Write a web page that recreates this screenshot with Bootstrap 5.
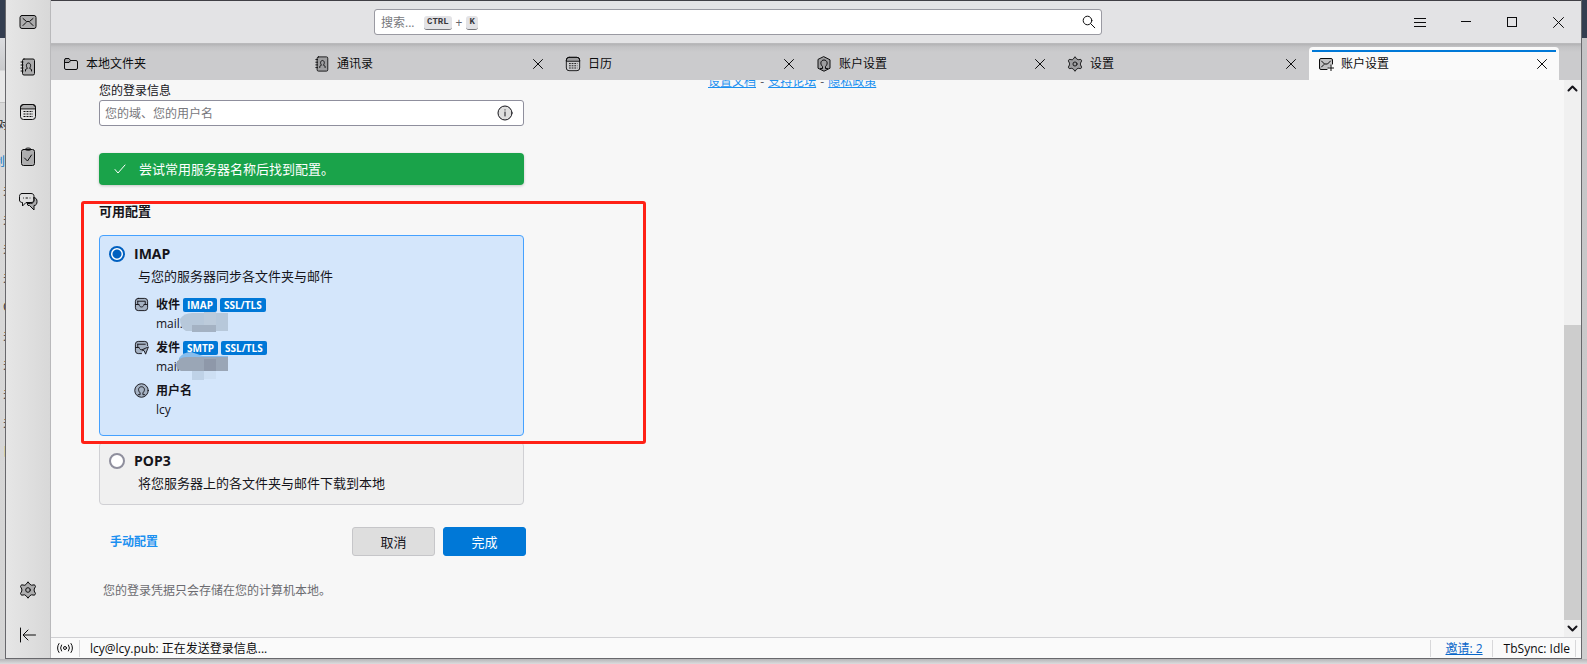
<!DOCTYPE html>
<html lang="zh-CN">
<head>
<meta charset="utf-8">
<meta name="viewport" content="width=device-width, initial-scale=1">
<title>账户设置</title>
<link href="https://cdn.jsdelivr.net/npm/bootstrap@5.3.0/dist/css/bootstrap.min.css" rel="stylesheet">
<style>
body{font:12px/16px "Open Sans","Noto Sans CJK SC",sans-serif;color:#15141a;background:#d6d6d8}
svg{display:block;fill:none;stroke:currentColor;stroke-linecap:round;stroke-linejoin:round;flex:none}
.fl{fill:#18181b40}
button.plain{background:none;border:0;padding:0;color:#0c0c0d;display:flex;align-items:center;justify-content:center}
/* desktop behind the window */
.strip-left{width:5px;color:#333;background:linear-gradient(#343e50 38px,#dcdde0 38px,#c9cacc 70px,#e8e8e8 71px,#e8e8e8 102px,#aaa 102px,#d9d9d9 103px,#d4d4d4);padding-top:115px}
.strip-left div{height:29px;line-height:20px;padding-left:3px;white-space:nowrap}
.strip-left div.first{height:37px;padding-left:0;margin-left:-3px}
.strip-left div.linked{color:#0b78c8;padding-left:0;margin-left:-7px}
.strip-left div.warm{color:#b85b00}
.strip-right{width:5px;background:linear-gradient(#343e50 38px,#c4c4c6 38px,#cfcfcf)}
.strip-bottom{height:5px;background:linear-gradient(#b5b5b7,#dcdcde)}
.app{border:solid #68686c;border-width:0 1px 1px;background:#f7f7f7}
.spaces{width:45px;border-right:1px solid #b9b9bb;background:linear-gradient(90deg,#e6e6e6,#d8d8d8)}
.spaces .plain{height:45px;width:44px;padding-bottom:1px}
.titlebar{border-top:1px solid #403f45;height:43px;background:#e3e3e5;padding-left:24px}
.search{width:728px}
.search input{height:26px;border:1px solid #9a9aa2;border-radius:3px;padding:0 6px;font-size:12px;line-height:16px}
.search input::placeholder,.login input::placeholder{color:#77777c;opacity:1}
.keys{left:50px;top:6px;color:#66666b;pointer-events:none}
.keys kbd{background:#e3e3e6;color:#38383d;border-bottom:1px solid #77777c;border-radius:3px;font:bold 9px/13px "Liberation Mono",monospace;padding:0 3px}
.search .plain{right:3px;top:4px;width:20px;height:18px}
.winbtn{width:46px;height:42px}
.winbtn.menu{width:42px;padding-right:4px}
.tabs{height:37px;background:linear-gradient(#b3b3b5,#c3c3c5 3px,#cbcbcd 8px);padding:3px 22px 0 3px;border-top:1px solid #b9b9bb}
.tabitem{flex:1 1 0;min-width:0;height:33px;padding:0 10px 0 9px;gap:7px;font-size:12px;color:#0c0c0d}
.tabitem .plain{width:14px;height:14px}
.tabitem.current{background:#fafafa;border-radius:4px 4px 0 0;position:relative}
.tabitem.current::before{content:"";position:absolute;left:3px;right:3px;top:3px;height:2px;background:#0078d7}
.workspace{padding-left:48px;gap:184px}
.login{width:425px;padding-top:3px}
.login input[type=text]{height:26px;border:1px solid #8f8f9d;border-radius:3px;padding:0 5px;font-size:12px;margin-top:1px}
.info{right:11px;top:5px}
.notice{margin-top:27px;height:32px;background:#1aa34a;color:#fff;border-radius:4px;font-size:13px;box-shadow:0 1px 3px #0003;padding-left:15px;gap:13px}
.configs{margin-top:16px}
.configs h2{font-size:13px;line-height:20px;font-weight:700;margin:0 0 14px}
.choice{border:1px solid #d0d0d4;border-radius:4px;background:#f0f0f0;padding:8px 9px 11px;margin-bottom:6px;font-size:13px;line-height:20px}
.choice.on{background:#d4e6fb;border-color:#45a1ff;padding-bottom:16px}
.choice input{appearance:none;width:16px;height:16px;border:2px solid #8f8f9d;border-radius:50%;background:#fff;margin:0 9px 0 0;flex:none}
.choice input:checked{border-color:#0060c0;background:radial-gradient(#0060c0 4px,#fff 5px)}
.choice .name{font-size:14px;font-weight:700;line-height:20px}
.choice p{margin:2px 0 0 29px}
.servers{margin:9px 0 0 25px;font-size:12px;line-height:19px}
.servers .entry{gap:7px}
.servers .entry + .entry{margin-top:5px}
.servers .entry svg.kind{margin-top:2px}
.servers dt{font-weight:700;gap:3px}
.tag{background:#0078d7;color:#fff;border-radius:2px;font-size:10px;line-height:14px;padding:0 4px}
.servers dd{margin:0;position:relative}
.mosaic{position:absolute;stroke:none}
.marker{left:-18px;top:0;width:565px;height:243px;border:3px solid #ff2116;border-radius:3px;pointer-events:none}
.actions{margin:22px -2px 0 0;gap:8px;padding-left:11px}
.actions a{color:#1b90f0;font-weight:700;text-decoration:none}
.actions .btn{width:83px;height:29px;padding:0;font-size:13px;line-height:20px;border-radius:3px;color:#15141a;background:#dedede;border-color:#c6c6c9}
.actions .btn.go{background:#0078d7;border-color:#0078d7;color:#fff}
.hint{margin:27px 0 0 4px;color:#6b6b70}
.help{margin-top:-6px;color:#5b5b66}
.help a{color:#1b90f0}
.help span{margin:0 1px}
.scroller{width:17px;background:#f0f0f0}
.scroller svg{margin:5px 3px}
.thumb{height:56.5%;background:#cdcdcd}
.status{height:21px;border-top:1px solid #d0d0d3;background:#fafafa;font-size:12px;color:#0c0c0d}
.status a{color:#0a67c9}
.cell{border-left:1px solid #d8d8da;line-height:18px;height:17px}
</style>
</head>
<body>
<svg width="0" height="0" class="position-absolute" aria-hidden="true">
<defs>
<symbol id="mail" viewBox="0 0 18 16"><rect class="fl" x="1" y="1.500" width="16" height="13" rx="2"/><path d="M4 4.500l3.500 3h3l3.500-3M4 11.500l3-3M14 11.500l-3-3"/></symbol>
<symbol id="book" viewBox="0 0 16 18"><rect class="fl" x="2.500" y="1" width="12" height="16" rx="1.500"/><path d="M1 4h2M1 7h2M1 10h2M1 13h2M5.500 13v-1.500l2-1.200C5.500 8 6.500 5 8.500 5s3 3 1 5.300l2 1.200V13"/></symbol>
<symbol id="cal" viewBox="0 0 18 18"><rect x="1.500" y="1.500" width="15" height="15" rx="3"/><path class="fl" d="M1.500 5.500v-1a3 3 0 013-3h9a3 3 0 013 3v1z"/><path stroke-linecap="butt" stroke-dasharray="2 1" d="M4.500 8.500H14M4.500 11H14M4.500 13.500H14"/></symbol>
<symbol id="gear" viewBox="0 0 18 18"><path class="fl" d="M7.200 3.200L9 .8l1.800 2.400 1.700 1 3-.4 1 1.700-1.300 2.500v2l1.300 2.500-1 1.700-3-.4-1.700 1L9 17.200l-1.800-2.400-1.700-1-3 .4-1-1.700L2.800 10V8L1.500 5.500l1-1.700 3 .4z"/><circle cx="9" cy="9" r="2.300"/></symbol>
<symbol id="person" viewBox="0 0 16 16"><path d="M4.500 12.500h2v-2C3.500 7.500 5 4 8 4s4.500 3.500 1.500 6.500v2h2"/></symbol>
<symbol id="close" viewBox="0 0 12 12"><path d="M1.500 1.500l9 9M10.500 1.500l-9 9"/></symbol>
<symbol id="tray" viewBox="0 0 16 16"><rect class="fl" x="1.500" y="1.500" width="13" height="13" rx="3"/><path d="M4 4.500h8v3M4 4.500v3M2 8h3.500c0 3.500 5 3.500 5 0H14"/></symbol>
</defs>
</svg>
<div class="vh-100 d-flex flex-column overflow-hidden">
<div class="d-flex flex-grow-1" style="min-height:0">
  <div class="strip-left overflow-hidden flex-shrink-0" aria-hidden="true">
    <div class="first">对</div><div class="linked">创</div><div>关</div><div>关</div><div>关</div><div>关</div><div>C</div><div>关</div><div>关</div><div>关</div><div>关</div><div class="warm">日</div>
  </div>
  <div class="app d-flex flex-grow-1" style="min-width:0">
    <nav class="spaces d-flex flex-column flex-shrink-0" aria-label="空间">
      <button class="plain" aria-label="邮件"><svg width="18" height="16"><use href="#mail"/></svg></button>
      <button class="plain" aria-label="通讯录"><svg width="16" height="18"><use href="#book"/></svg></button>
      <button class="plain" aria-label="日历"><svg width="18" height="18"><use href="#cal"/></svg></button>
      <button class="plain" aria-label="任务"><svg width="16" height="20" viewBox="0 0 16 20"><rect class="fl" x="1.500" y="2.500" width="13" height="16" rx="2"/><path d="M5 2.500c0-2 6-2 6 0 0 1-6 1-6 0zM4.500 11l3 3 4-6"/></svg></button>
      <button class="plain" aria-label="聊天"><svg width="20" height="20" viewBox="0 0 20 20"><path class="fl" d="M16 5.500c2 .5 3 1.500 3 4s-1 4-3 4V18l-4.500-4.500H10l-1-2h3.500c2 0 3.500-1 3.500-3z"/><path d="M4 1.500h9c2 0 3 1 3 3v3c0 2-1 3-3 3H8L4.500 14v-3.500C2.500 10.500 1.500 9.500 1.500 8V4.500c0-2 1-3 2.500-3zM5.500 6h0M8 6h1.500M12 6h0"/></svg></button>
      <button class="plain mt-auto" aria-label="设置"><svg width="18" height="18"><use href="#gear"/></svg></button>
      <button class="plain" aria-label="收起"><svg width="18" height="16" viewBox="0 0 18 16"><path d="M1.500 1v14M16.500 8H4.500M9 3L4 8l5 5"/></svg></button>
    </nav>
    <div class="d-flex flex-column flex-grow-1" style="min-width:0">
      <header class="titlebar d-flex align-items-center flex-shrink-0">
        <form class="search position-relative mx-auto" role="search">
          <input class="form-control" type="text" placeholder="搜索..." aria-label="搜索">
          <span class="keys position-absolute d-flex align-items-center gap-1"><kbd>CTRL</kbd>+<kbd>K</kbd></span>
          <button type="button" class="plain position-absolute" aria-label="搜索"><svg width="14" height="14" viewBox="0 0 14 14"><circle cx="5.500" cy="5.500" r="4.300"/><path d="M8.800 8.800l4 4"/></svg></button>
        </form>
        <div class="d-flex">
          <button class="plain winbtn menu" aria-label="菜单"><svg width="12" height="11" shape-rendering="crispEdges"><path d="M0 1.500h12M0 5.500h12M0 9.500h12"/></svg></button>
          <button class="plain winbtn" aria-label="最小化"><svg width="10" height="10" shape-rendering="crispEdges"><path d="M0 4.500h10"/></svg></button>
          <button class="plain winbtn" aria-label="最大化"><svg width="10" height="10" shape-rendering="crispEdges"><path d="M.5 .5h9v9h-9z"/></svg></button>
          <button class="plain winbtn" aria-label="关闭"><svg width="11" height="11"><path d="M.5 .5l10 10M10.500 .5l-10 10"/></svg></button>
        </div>
      </header>
      <nav class="tabs d-flex flex-shrink-0" style="gap:1px" aria-label="标签页">
        <div class="tabitem d-flex align-items-center"><svg width="16" height="14" viewBox="0 0 16 14"><path d="M3 1.500h3l1.500 2h5.500a1.500 1.500 0 011.500 1.500v6a1.500 1.500 0 01-1.500 1.500H3A1.500 1.500 0 011.500 11V3A1.500 1.500 0 013 1.500z"/><path class="fl" stroke="none" d="M1.500 1.500H6l2 4H1.500z"/><path d="M1.500 5.500H6l1.500-2"/></svg><span>本地文件夹</span></div>
        <div class="tabitem d-flex align-items-center"><svg width="16" height="16"><use href="#book"/></svg><span>通讯录</span><button class="plain ms-auto" aria-label="关闭"><svg width="12" height="12"><use href="#close"/></svg></button></div>
        <div class="tabitem d-flex align-items-center"><svg width="16" height="16"><use href="#cal"/></svg><span>日历</span><button class="plain ms-auto" aria-label="关闭"><svg width="12" height="12"><use href="#close"/></svg></button></div>
        <div class="tabitem d-flex align-items-center"><svg width="16" height="16" viewBox="0 0 16 16"><path class="fl" d="M8 .8l6 3v8.400l-6 3-6-3V3.800z"/><use href="#person" width="16" height="16"/></svg><span>账户设置</span><button class="plain ms-auto" aria-label="关闭"><svg width="12" height="12"><use href="#close"/></svg></button></div>
        <div class="tabitem d-flex align-items-center"><svg width="16" height="16"><use href="#gear"/></svg><span>设置</span><button class="plain ms-auto" aria-label="关闭"><svg width="12" height="12"><use href="#close"/></svg></button></div>
        <div class="tabitem current d-flex align-items-center"><svg width="16" height="14" viewBox="0 0 16 14"><path class="fl" d="M9 12.500H3A1.500 1.500 0 011.500 11V3A1.500 1.500 0 013 1.500h10A1.500 1.500 0 0114.500 3v4"/><path d="M3.500 4l3 3h3l3-3M3.500 10L6 7.500M13 8v6M10 11h6"/></svg><span>账户设置</span><button class="plain ms-auto" aria-label="关闭"><svg width="12" height="12"><use href="#close"/></svg></button></div>
      </nav>
      <div class="d-flex flex-grow-1 overflow-hidden">
        <main class="workspace d-flex flex-grow-1 align-items-start">
          <form class="login flex-shrink-0">
            <label class="d-block" for="user">您的登录信息</label>
            <div class="position-relative">
              <input class="form-control" type="text" id="user" placeholder="您的域、您的用户名">
              <svg class="info position-absolute" width="16" height="16" viewBox="0 0 16 16" stroke="#5b5b66"><circle cx="8" cy="8" r="7" fill="#dedede"/><path d="M8 7v4M8 4.800v.2"/></svg>
            </div>
            <div class="notice d-flex align-items-center" role="status"><svg width="12" height="10" viewBox="0 0 12 10"><path d="M1 5.500l3 3.500 7-8"/></svg><span>尝试常用服务器名称后找到配置。</span></div>
            <section class="configs position-relative">
              <h2>可用配置</h2>
              <div class="choice on">
                <div class="d-flex align-items-center"><input type="radio" name="proto" id="imap" checked><label class="name" for="imap">IMAP</label></div>
                <p>与您的服务器同步各文件夹与邮件</p>
                <dl class="servers mb-0">
                  <div class="entry d-flex"><svg class="kind" width="15" height="15"><use href="#tray"/></svg><div><dt class="d-flex align-items-center"><span>收件</span><span class="tag">IMAP</span><span class="tag">SSL/TLS</span></dt><dd>mail.<svg class="mosaic" style="left:24px;top:-3px" width="48" height="22"><path fill="#b7c8da" d="M0 8q4-6 12-6h36v18H6q-6-3-6-12z"/><path fill="#bccbdb" d="M24 1h12v13H24z"/><path fill="#a4b2c3" d="M12 14h24v7H12z"/></svg></dd></div></div>
                  <div class="entry d-flex"><svg class="kind" width="15" height="15" viewBox="0 0 16 16"><path class="fl" d="M8 14.500H4.500a3 3 0 01-3-3v-7a3 3 0 013-3h7a3 3 0 013 3V6M4 4.500h8M4 4.500v3M2 8h3.500c.5 2 1 2.500 3 2.500"/><path class="fl" d="M15 7.500l-6.500 3 2.500 1.200 1.200 3z"/></svg><div><dt class="d-flex align-items-center"><span>发件</span><span class="tag">SMTP</span><span class="tag">SSL/TLS</span></dt><dd>mail<svg class="mosaic" style="left:20px;top:-5px" width="52" height="30"><path fill="#88bdec" d="M3 6q4-6 12-6l12 4h25v4H3z"/><path fill="#9aa6b6" d="M0 12q3-7 10-7h42v14H5q-5-2-5-7z"/><path fill="#8e98a9" d="M28 7h12v12H28z"/><path fill="#bfd2e7" d="M16 19h12v9H16z"/><path fill="#cddff3" d="M28 19h12v8H28z"/></svg></dd></div></div>
                  <div class="entry d-flex"><svg class="kind" width="15" height="15" viewBox="0 0 16 16"><circle class="fl" cx="8" cy="8" r="7.200"/><use href="#person" width="16" height="16"/></svg><div><dt>用户名</dt><dd>lcy</dd></div></div>
                </dl>
              </div>
              <div class="choice mb-0">
                <div class="d-flex align-items-center"><input type="radio" name="proto" id="pop3"><label class="name" for="pop3">POP3</label></div>
                <p>将您服务器上的各文件夹与邮件下载到本地</p>
              </div>
              <div class="marker position-absolute" aria-hidden="true"></div>
            </section>
            <div class="actions d-flex align-items-center"><a class="me-auto" href="#">手动配置</a><button type="button" class="btn">取消</button><button type="button" class="btn go">完成</button></div>
            <p class="hint">您的登录凭据只会存储在您的计算机本地。</p>
          </form>
          <div class="help text-nowrap"><a href="#">设置文档</a><span> - </span><a href="#">支持论坛</a><span> - </span><a href="#">隐私政策</a></div>
        </main>
        <div class="scroller d-flex flex-column flex-shrink-0" aria-hidden="true">
          <svg width="11" height="7" stroke="#606060" stroke-width="2"><path d="M1.500 5.500l4-4 4 4"/></svg>
          <div class="flex-grow-1 d-flex flex-column justify-content-end" style="min-height:0"><div class="thumb"></div></div>
          <svg width="11" height="7" stroke="#606060" stroke-width="2"><path d="M1.500 1.500l4 4 4-4"/></svg>
        </div>
      </div>
      <footer class="status d-flex align-items-center flex-shrink-0">
        <svg class="mx-1" width="20" height="12" viewBox="0 0 20 12"><circle cx="10" cy="6" r="1.500"/><path d="M6.500 3q-2 3 0 6M13.500 3q2 3 0 6M4 1.500q-3 4.500 0 9M16 1.500q3 4.500 0 9"/></svg>
        <div class="cell flex-grow-1" style="padding-left:10px">lcy@lcy.pub: 正在发送登录信息...</div>
        <div class="cell" style="padding:0 9px 0 14px"><a href="#">邀请: 2</a></div>
        <div class="cell" style="padding:0 5px 0 11px">TbSync: Idle</div>
        <div class="cell" style="width:6px"></div>
      </footer>
    </div>
  </div>
  <div class="strip-right flex-shrink-0"></div>
</div>
<div class="strip-bottom flex-shrink-0"></div>
</div>
<script src="https://cdn.jsdelivr.net/npm/bootstrap@5.3.0/dist/js/bootstrap.bundle.min.js"></script>
</body>
</html>
